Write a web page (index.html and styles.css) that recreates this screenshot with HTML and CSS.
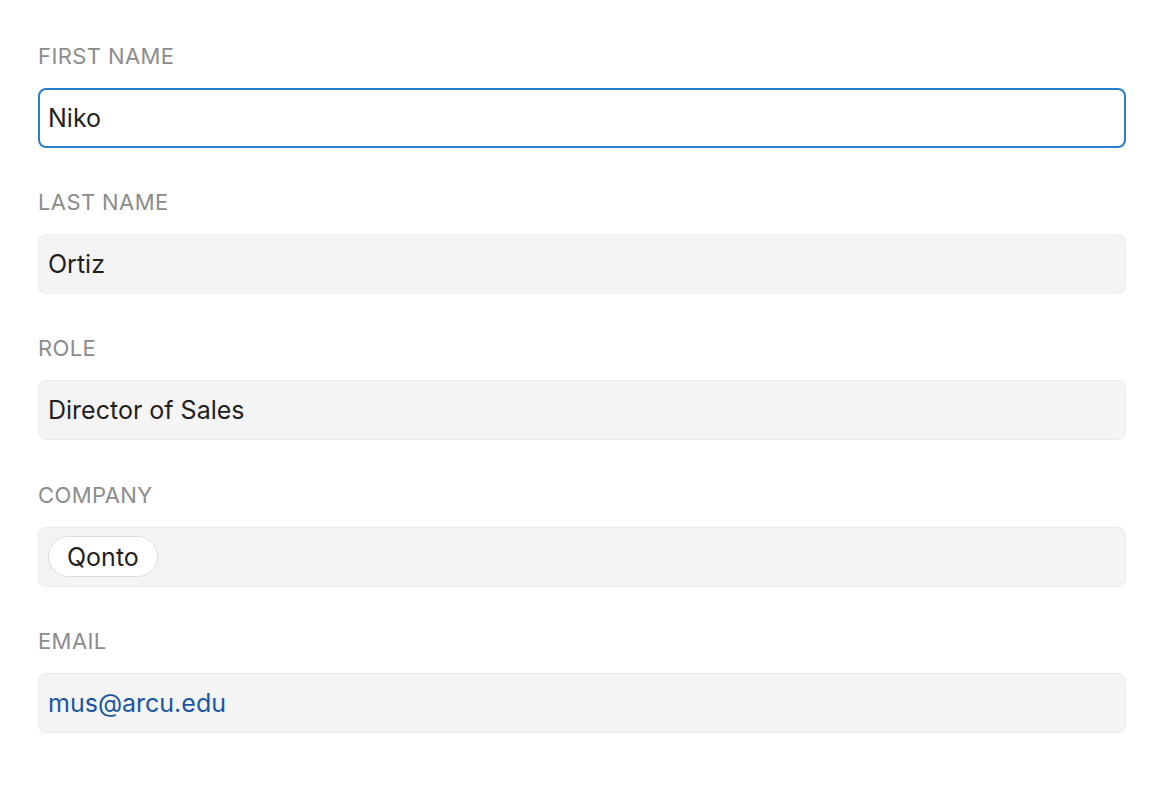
FILE: index.html
```html
<!DOCTYPE html>
<html>
<head>
<meta charset="utf-8">
<link rel="stylesheet" href="styles.css">
</head>
<body>
<form class="form">
  <div class="field">
    <div class="label">FIRST NAME</div>
    <div class="input focused">Niko</div>
  </div>
  <div class="field">
    <div class="label">LAST NAME</div>
    <div class="input">Ortiz</div>
  </div>
  <div class="field">
    <div class="label">ROLE</div>
    <div class="input">Director of Sales</div>
  </div>
  <div class="field">
    <div class="label">COMPANY</div>
    <div class="input"><span class="chip">Qonto</span></div>
  </div>
  <div class="field">
    <div class="label">EMAIL</div>
    <div class="input"><span class="link">mus@arcu.edu</span></div>
  </div>
</form>
</body>
</html>
```
FILE: styles.css
```css
html, body {
  margin: 0;
  padding: 0;
  background: #ffffff;
  font-family: Inter, "Noto Sans", sans-serif;
}
.form {
  display: flex;
  flex-direction: column;
  gap: 42.2px;
  padding: 44px 30px 0 38px;
}
.field {
  display: flex;
  flex-direction: column;
  gap: 20px;
}
.label {
  font-size: 22px;
  line-height: 24px;
  color: #8c8c8c;
  letter-spacing: 0.4px;
}
.input {
  box-sizing: border-box;
  height: 60px;
  display: flex;
  align-items: center;
  padding: 0 9px;
  background: #f4f4f4;
  border: 1px solid #ebebeb;
  border-radius: 8px;
  font-size: 25px;
  color: #1f1f1f;
}
.input.focused {
  background: #ffffff;
  border: 2px solid #2a80c8;
  padding: 0 8px;
}
.chip {
  display: inline-flex;
  align-items: center;
  height: 41px;
  box-sizing: border-box;
  padding: 0 18px;
  background: #ffffff;
  border: 1px solid #dcdcdc;
  border-radius: 21px;
  color: #1f1f1f;
}
.link {
  color: #1a56a3;
}
```
